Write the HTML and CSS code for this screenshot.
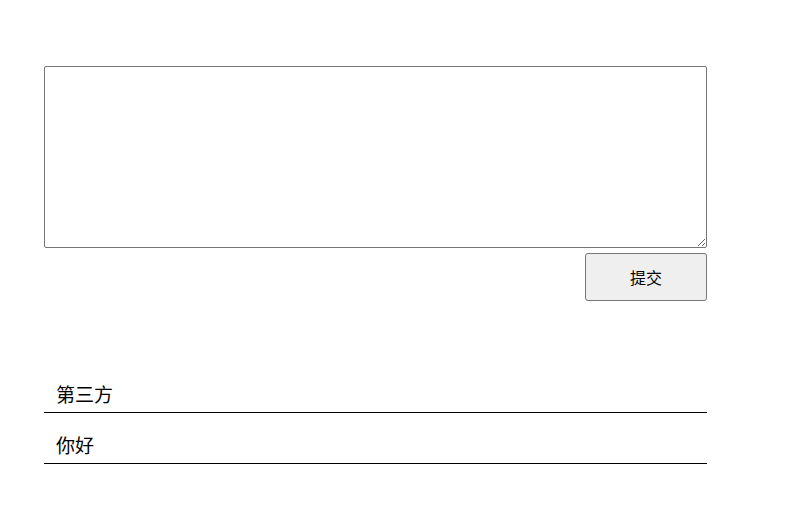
FILE: index.html
```html
<!DOCTYPE html>
<html lang="zh">
<head>
<meta charset="utf-8">
<link rel="stylesheet" href="styles.css">
</head>
<body>
<div class="page">
  <form class="composer">
    <textarea class="input"></textarea>
    <div class="actions">
      <button type="button" class="submit">提交</button>
    </div>
  </form>
  <ul class="list">
    <li class="item">第三方</li>
    <li class="item">你好</li>
  </ul>
</div>
</body>
</html>
```

FILE: styles.css
```css
html, body {
  margin: 0;
  padding: 0;
  background: #fff;
}
body {
  font-family: "Noto Sans CJK SC", "Noto Sans", sans-serif;
  color: #000;
}
.page {
  width: 663px;
  padding: 66px 0 0 44px;
}
.composer {
  margin: 0;
}
.input {
  display: block;
  box-sizing: border-box;
  width: 663px;
  height: 182px;
  margin: 0;
  border: 1px solid #767676;
  border-radius: 2px;
  padding: 2px;
  font-family: inherit;
  font-size: 14px;
  background: #fff;
}
.actions {
  display: flex;
  justify-content: flex-end;
  margin-top: 5px;
}
.submit {
  box-sizing: border-box;
  width: 122px;
  height: 48px;
  border: 1px solid #767676;
  border-radius: 3px;
  background: #efefef;
  font-family: inherit;
  font-size: 16px;
  color: #000;
  padding: 0;
}
.list {
  list-style: none;
  margin: 61px 0 0;
  padding: 0;
}
.item {
  box-sizing: border-box;
  height: 51px;
  padding: 19px 12px 0;
  line-height: 26px;
  font-size: 19px;
  border-bottom: 1px solid #000;
}
```
